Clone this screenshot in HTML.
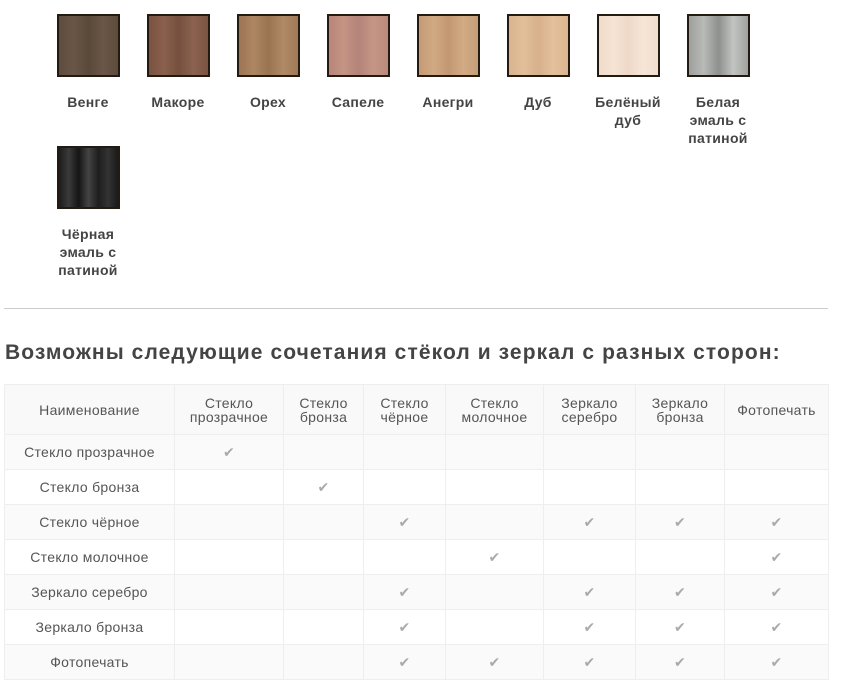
<!DOCTYPE html>
<html><head><meta charset="utf-8"><style>
body{margin:0;background:#fff;font-family:"Liberation Sans","DejaVu Sans",sans-serif;color:#444;width:841px;height:689px;position:relative;overflow:hidden}
.sw{position:absolute;width:90px;text-align:center}
.sq{width:59px;height:59px;border:2px solid #231a12;margin:0 auto;box-sizing:content-box}
.lb{font-weight:bold;font-size:14px;line-height:18px;margin-top:16px;color:#444;letter-spacing:0.3px}
hr{position:absolute;left:4px;top:308px;width:824px;margin:0;border:0;border-top:1px solid #ccc}
h2{position:absolute;left:5px;top:341px;margin:0;font-size:21px;font-weight:bold;color:#444;letter-spacing:1.1px}
table{position:absolute;left:4px;top:384px;border-collapse:collapse;font-size:14px;color:#555;letter-spacing:0.3px}
td{border:1px solid #eee;text-align:center;height:34px;padding:0}
tr.h td{height:49px;background:#f9f9f9;line-height:14px}
tr:nth-child(odd):not(.h) td{background:#fff}
tr:nth-child(even) td{background:#fafafa}
.c{color:#aaa;font-size:14px}
</style></head><body>
<div class="sw" style="left:43px;top:14px"><div class="sq" style="background:linear-gradient(90deg,#5e4c3e,#6a5646,#5a4838,#6b5747,#5d4b3c)"></div><div class="lb">Венге</div></div>
<div class="sw" style="left:133px;top:14px"><div class="sq" style="background:linear-gradient(90deg,#7a5241,#8a604c,#764f3e,#8b624f,#7c5443)"></div><div class="lb">Макоре</div></div>
<div class="sw" style="left:223px;top:14px"><div class="sq" style="background:linear-gradient(90deg,#9c7554,#ad8662,#9a7352,#b08a66,#a07a58)"></div><div class="lb">Орех</div></div>
<div class="sw" style="left:313px;top:14px"><div class="sq" style="background:linear-gradient(90deg,#b8867a,#c49484,#b4837a,#c59686,#ba897c)"></div><div class="lb">Сапеле</div></div>
<div class="sw" style="left:403px;top:14px"><div class="sq" style="background:linear-gradient(90deg,#c49b76,#d0a982,#c29872,#d2ab85,#c59d78)"></div><div class="lb">Анегри</div></div>
<div class="sw" style="left:493px;top:14px"><div class="sq" style="background:linear-gradient(90deg,#d9b48e,#e2bf9a,#d6b18b,#e4c19c,#dab590)"></div><div class="lb">Дуб</div></div>
<div class="sw" style="left:583px;top:14px"><div class="sq" style="background:linear-gradient(90deg,#f0dccb,#f5e3d3,#eed9c8,#f6e5d6,#f1ddcc)"></div><div class="lb">Белёный<br>дуб</div></div>
<div class="sw" style="left:673px;top:14px"><div class="sq" style="background:linear-gradient(90deg,#9ea09e,#b8bab8,#8e908e,#c2c4c2,#a0a2a0)"></div><div class="lb">Белая<br>эмаль с<br>патиной</div></div>
<div class="sw" style="left:43px;top:146px"><div class="sq" style="background:linear-gradient(90deg,#1c1c1c,#3a3a3a,#151515,#444,#1e1e1e,#333,#1a1a1a)"></div><div class="lb">Чёрная<br>эмаль с<br>патиной</div></div>
<hr>
<h2>Возможны следующие сочетания стёкол и зеркал с разных сторон:</h2>
<table>
<colgroup><col style="width:170px"><col style="width:109px"><col style="width:80px"><col style="width:82px"><col style="width:98px"><col style="width:92px"><col style="width:89px"><col style="width:104px"></colgroup>
<tr class="h"><td>Наименование</td><td>Стекло<br>прозрачное</td><td>Стекло<br>бронза</td><td>Стекло<br>чёрное</td><td>Стекло<br>молочное</td><td>Зеркало<br>серебро</td><td>Зеркало<br>бронза</td><td>Фотопечать</td></tr>
<tr><td>Стекло прозрачное</td><td class="c">✔</td><td></td><td></td><td></td><td></td><td></td><td></td></tr>
<tr><td>Стекло бронза</td><td></td><td class="c">✔</td><td></td><td></td><td></td><td></td><td></td></tr>
<tr><td>Стекло чёрное</td><td></td><td></td><td class="c">✔</td><td></td><td class="c">✔</td><td class="c">✔</td><td class="c">✔</td></tr>
<tr><td>Стекло молочное</td><td></td><td></td><td></td><td class="c">✔</td><td></td><td></td><td class="c">✔</td></tr>
<tr><td>Зеркало серебро</td><td></td><td></td><td class="c">✔</td><td></td><td class="c">✔</td><td class="c">✔</td><td class="c">✔</td></tr>
<tr><td>Зеркало бронза</td><td></td><td></td><td class="c">✔</td><td></td><td class="c">✔</td><td class="c">✔</td><td class="c">✔</td></tr>
<tr><td>Фотопечать</td><td></td><td></td><td class="c">✔</td><td class="c">✔</td><td class="c">✔</td><td class="c">✔</td><td class="c">✔</td></tr>
</table>
</body></html>
